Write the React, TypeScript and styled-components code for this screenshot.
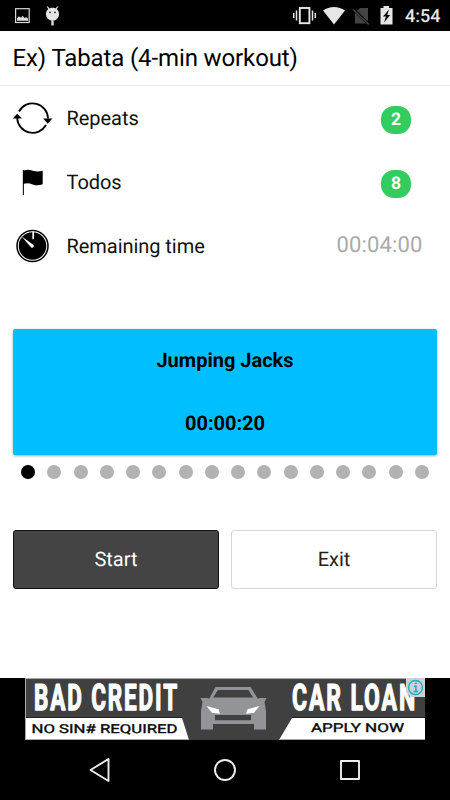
import React from "react";
import styled, { createGlobalStyle } from "styled-components";

const GlobalStyle = createGlobalStyle`
  * { box-sizing: border-box; }
  body { margin: 0; background: #fff; font-family: Roboto, "Liberation Sans", sans-serif; color: #000; text-rendering: geometricPrecision; }
`;

const Screen = styled.div`
  width: 450px;
  height: 800px;
  display: flex;
  flex-direction: column;
  overflow: hidden;
  background: #fff;
`;

const StatusBar = styled.header`
  height: 31px;
  flex: none;
  display: flex;
  justify-content: space-between;
  background: #000;
  svg { display: block; }
`;

const StatusRight = styled.div`
  display: flex;
  width: 160px;
`;

const Clock = styled.span`
  font-size: 18px;
  line-height: 33px;
  font-weight: 500;
  color: #e6e6e6;
  white-space: nowrap;
`;

const TitleBar = styled.h1`
  margin: 0;
  height: 55px;
  flex: none;
  padding-left: 12.5px;
  border-bottom: 1px solid #eee;
  font-size: 24px;
  line-height: 55px;
  font-weight: 400;
  letter-spacing: -0.12px;
`;

const List = styled.section`
  flex: none;
  height: 243px;
`;

const Row = styled.div`
  height: 64px;
  padding: 0 27.5px 0 12px;
  display: flex;
  align-items: center;
  svg { flex: none; display: block; }
`;

const RowLabel = styled.span`
  flex: 1;
  padding-left: 13.5px;
  font-size: 20px;
  line-height: 24px;
  letter-spacing: -0.05px;
  color: #111;
`;

const Badge = styled.span`
  width: 30px;
  height: 28px;
  margin: 4px 11.5px 0 0;
  border-radius: 13px;
  background: #33cd5f;
  color: #fff;
  font-size: 17.5px;
  font-weight: 700;
  line-height: 28px;
  text-align: center;
`;

const Remaining = styled.span`
  font-size: 22px;
  line-height: 26px;
  margin-top: -1px;
  letter-spacing: 0.15px;
  color: #aaa;
`;

const Card = styled.section`
  flex: none;
  height: 126px;
  margin: 0 13px;
  border-radius: 2px;
  background: #00bfff;
  box-shadow: 0 1px 3px rgba(0, 0, 0, 0.35);
  display: flex;
  flex-direction: column;
  align-items: center;
  font-size: 20px;
  font-weight: 700;
`;

const CardLine = styled.div`
  height: 63px;
  line-height: 63px;
`;

const Dots = styled.div`
  flex: none;
  height: 34px;
  padding: 0 21px;
  display: flex;
  justify-content: space-between;
  align-items: center;
`;

const Dot = styled.span<{ $active: boolean }>`
  width: 14px;
  height: 14px;
  border-radius: 50%;
  background: ${(p) => (p.$active ? "#000" : "#b2b2b2")};
`;

const Actions = styled.div`
  flex: none;
  height: 59px;
  margin: 41px 13px 0;
  display: flex;
  gap: 12px;
`;

const ActionButton = styled.button<{ $dark?: boolean }>`
  flex: 1;
  padding: 0 0 1px;
  border: 1px solid ${(p) => (p.$dark ? "#111" : "#d8d8d8")};
  border-radius: 3px;
  background: ${(p) => (p.$dark ? "#444" : "#fff")};
  color: ${(p) => (p.$dark ? "#fff" : "#222")};
  font-family: inherit;
  font-size: 20px;
  text-rendering: inherit;
`;

const AdStrip = styled.aside`
  flex: none;
  height: 62px;
  margin-top: auto;
  background: #000;
  display: flex;
  justify-content: center;
  svg { display: block; overflow: visible; }
`;

const NavBar = styled.nav`
  flex: none;
  height: 60px;
  background: #000;
  display: flex;
  justify-content: center;
  gap: 95px;
  align-items: center;
  svg { display: block; }
`;

const NotificationIcons = () => (
  <svg width="70" height="31" fill="none">
    <rect x="15.6" y="8.7" width="13.6" height="13.8" stroke="#d8d8d8" strokeWidth="1.2" />
    <path d="M17 20.7v-2.4l2-2 2 1.5 1.5-2 2 2.2 1.6-.8 1.9 1.3v2.2z" fill="#ddd" />
    <path d="M47.3 6.5l2 3M57.7 6.5l-2 3" stroke="#ddd" strokeWidth="1.3" />
    <path d="M46 14C46 5.8 59 5.8 59 14c0 3.8-2.8 6.7-6.5 6.7S46 17.8 46 14z" fill="#e6e6e6" />
    <circle cx="50" cy="12.3" r=".9" fill="#222" />
    <circle cx="55" cy="12.3" r=".9" fill="#222" />
    <path d="M52.5 20.5v5" stroke="#ddd" strokeWidth="2.4" />
  </svg>
);

const SystemIcons = () => (
  <svg width="115" height="31" fill="none">
    <rect x="9.8" y="8" width="9.6" height="15.2" stroke="#e6e6e6" strokeWidth="1.9" />
    <path d="M3.7 13v5M6.5 10.5v10M22.5 10.5v10M25.3 13v5" stroke="#e6e6e6" strokeWidth="1.5" />
    <path d="M33 10.6C39.3 5.7 48.7 5.7 55 10.6L44 24.4z" fill="#e6e6e6" />
    <path d="M65 13l5-5h8v15.5H65z" fill="#444" />
    <path d="M63 9l16 15.5" stroke="#000" strokeWidth="3" />
    <path d="M63 9.5l15.8 15" stroke="#4a4a4a" strokeWidth="1.4" />
    <path d="M90.5 8h3V6h5.5v2h3.5v16.5h-12z" fill="#e6e6e6" />
    <path d="M99 9.5l-6 7h3l-2 6 6.2-7.4h-3z" fill="#000" />
  </svg>
);

const RepeatIcon = () => (
  <svg width="41" height="40" fill="none">
    <path d="M7 13.5A15.4 15.4 0 0 1 36 20.5M34 27A15.4 15.4 0 0 1 5.2 20" stroke="#000" strokeWidth="1.8" />
    <path d="M31.2 20.5h9.2l-4.7 5.2zM.8 20.6h9.2L5.2 15.8z" fill="#000" />
  </svg>
);

const FlagIcon = () => (
  <svg width="41" height="40" fill="none">
    <path d="M11.4 8v25" stroke="#222" strokeWidth="1.2" />
    <path d="M11 8.9c3.5-1.8 6.4-1.3 9.7-.2 3.6 1.2 6.6.9 10 0v13.6c-3.4 1-6.4 1.4-10 .1-3.3-1.2-6.2-1.5-9.7-.3z" fill="#000" />
  </svg>
);

const TimerIcon = () => (
  <svg width="41" height="40" fill="none">
    <circle cx="20.5" cy="20" r="15.5" stroke="#000" strokeWidth="1.5" />
    <circle cx="20.5" cy="20" r="13.8" fill="#000" />
    <path d="M21.2 5.5v7.7" stroke="#fff" strokeWidth="1.7" />
    <path d="M9.5 10.2L21.5 19c1 1.5-.7 3.3-2.3 2.5z" fill="#fff" />
  </svg>
);

const AdBanner = () => (
  <svg width="400" height="62" role="img" aria-label="Bad credit car loan">
    <rect width="400" height="62" fill="#404040" />
    <path d="M0 40h157l7 22H0zM400 40H267l-13 22h146z" fill="#fff" />
    <path d="M0 39.5h157M267 39.5h133" stroke="#222" />
    <path d="M0 .5h400M.5 0v62M0 61.5h164M254 61.5h146" stroke="#aaa" />
    <g fill="#fff" stroke="#fff" strokeWidth="1.3" strokeLinejoin="round" fontFamily="Roboto, sans-serif" fontWeight="700" fontSize="36.5" letterSpacing="3">
      <text x="9" y="32" textLength="145" lengthAdjust="spacingAndGlyphs">BAD CREDIT</text>
      <text x="267" y="32" textLength="125" lengthAdjust="spacingAndGlyphs">CAR LOAN</text>
    </g>
    <g fill="#080808" stroke="#080808" strokeWidth=".35" fontFamily="Roboto, sans-serif" fontWeight="400" fontSize="12.3">
      <text x="6.5" y="55" textLength="146" lengthAdjust="spacingAndGlyphs">NO SIN# REQUIRED</text>
      <text x="286" y="54.4" textLength="93" lengthAdjust="spacingAndGlyphs">APPLY NOW</text>
    </g>
    <path fillRule="evenodd" fill="#929498" d="M190.5 9h35l7.5 12 1-1h7.5l-2 4 1.5 9v18.5h-12V46h-41v5.5h-12V33l1.5-9-2-4h7.5l1 1zM193 12l-5 7.5h40L223.5 12zM190 37v5.3h36V37z" />
    <path d="M181.5 28l12 3.2 1.5 4.5-8-1zM234.5 28l-12 3.2-1.5 4.5 8-1z" fill="#fff" />
    <path d="M381 0h19v19h-14l-5-5z" fill="#d0d0d0" />
    <circle cx="390.5" cy="9.5" r="7" fill="none" stroke="#18acd0" strokeWidth="1.4" />
    <path d="M389 8.2h1.9v5M388.5 13.5h4.5M389.8 5.3h2" fill="none" stroke="#18acd0" strokeWidth="1.5" />
  </svg>
);

const BackIcon = () => (
  <svg width="30" height="30" fill="none" stroke="#eee" strokeWidth="1.9" strokeLinejoin="round">
    <path d="M5.5 15l18-11v22z" />
  </svg>
);

const HomeIcon = () => (
  <svg width="30" height="30" fill="none" stroke="#eee" strokeWidth="1.9">
    <circle cx="15" cy="15" r="10" />
  </svg>
);

const RecentIcon = () => (
  <svg width="30" height="30" fill="none" stroke="#eee" strokeWidth="1.9" strokeLinejoin="round">
    <rect x="6" y="6" width="18" height="18" />
  </svg>
);

export default function App() {
  return (
    <Screen>
      <GlobalStyle />
      <StatusBar>
        <NotificationIcons />
        <StatusRight>
          <SystemIcons />
          <Clock>4:54</Clock>
        </StatusRight>
      </StatusBar>
      <TitleBar>Ex) Tabata (4-min workout)</TitleBar>
      <List>
        <Row><RepeatIcon /><RowLabel>Repeats</RowLabel><Badge>2</Badge></Row>
        <Row><FlagIcon /><RowLabel>Todos</RowLabel><Badge>8</Badge></Row>
        <Row><TimerIcon /><RowLabel>Remaining time</RowLabel><Remaining>00:04:00</Remaining></Row>
      </List>
      <Card>
        <CardLine>Jumping Jacks</CardLine>
        <CardLine>00:00:20</CardLine>
      </Card>
      <Dots>
        {Array.from({ length: 16 }, (_, i) => <Dot key={i} $active={i === 0} />)}
      </Dots>
      <Actions>
        <ActionButton $dark>Start</ActionButton>
        <ActionButton>Exit</ActionButton>
      </Actions>
      <AdStrip><AdBanner /></AdStrip>
      <NavBar><BackIcon /><HomeIcon /><RecentIcon /></NavBar>
    </Screen>
  );
}
